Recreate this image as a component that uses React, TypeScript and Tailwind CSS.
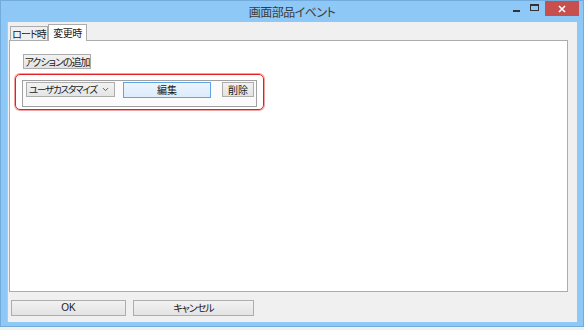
import { ChevronDown } from 'lucide-react';

const jp = "font-['Noto_Sans_CJK_JP','Noto_Sans',sans-serif] [font-feature-settings:'palt']";

function Btn({ label, className }: { label: string; className: string }) {
  return (
    <div
      className={`flex items-center justify-center whitespace-nowrap border border-[#adadad] bg-gradient-to-b from-[#f2f2f2] to-[#e3e3e3] text-[10px] leading-none text-[#1a1a1a] ${className}`}
    >
      {label}
    </div>
  );
}

export default function App() {
  return (
    <div className={`w-[584px] h-[330px] bg-[#f0f0f0] ${jp}`}>
      <div className="h-[327px] bg-[#8dc8f6] border border-[#73acdc] flex flex-col px-[6px] pb-[4px]">
        {/* Title bar */}
        <div className="h-[21px] relative flex items-center justify-center">
          <span className="text-[12px] text-[#3c3c3c] leading-none tracking-[-0.5px]">画面部品イベント</span>
          <div className="absolute right-[-2px] top-0 flex items-start">
            <div className="w-[18px] h-[15px] flex items-center justify-center">
              <div className="w-[7px] h-[2px] bg-[#333] mt-[5px]" />
            </div>
            <div className="w-[18px] h-[15px] flex items-center justify-center">
              <div className="w-[9px] h-[7px] border border-t-2 border-[#333] mt-[-2px]" />
            </div>
            <div className="w-[34px] h-[15px] bg-[#c7504f] flex items-center justify-center ml-[2px]">
              <svg width="8" height="8" viewBox="0 0 8 8">
                <path d="M1 1L7 7M7 1L1 7" stroke="#fff" strokeWidth="1.6" />
              </svg>
            </div>
          </div>
        </div>

        {/* Client area */}
        <div className="flex-1 bg-[#f0f0f0] border-l border-[#b9c9d6] flex flex-col">
          {/* Tabs */}
          <div className="h-[18px] flex items-end pl-[2px]">
            <div className="w-[38px] h-[14px] flex items-center justify-center whitespace-nowrap border border-b-0 border-[#acacac] bg-[#f0f0f0] text-[10px] text-[#1a1a1a] leading-none tracking-[-1px]">
              ロード時
            </div>
            <div className="w-[39px] h-[17px] -mb-px relative z-10 flex items-center justify-center whitespace-nowrap border border-b-0 border-[#acacac] bg-white text-[10px] text-[#1a1a1a] leading-none tracking-[-0.5px]">
              変更時
            </div>
          </div>

          {/* Tab panel */}
          <div className="ml-[1px] w-[559px] h-[252px] bg-white border border-[#acacac] pt-[13px] pl-[5px]">
            <Btn label="アクションの追加" className="ml-[8px] w-[68px] h-[15px] tracking-[-1px]" />

            <div className="mt-[5px] w-[249px] h-[36px] rounded-[5px] border border-[#e41e1e] shadow-[0_0_0_1px_#f7a0a0] p-[5px] pl-[6px]">
              <div className="w-[235px] h-[27px] border border-[#a0a0a0] bg-[#fbfbfb] flex items-start pt-[1px] pl-[3px]">
                <div className="w-[89px] h-[15px] border border-[#acacac] bg-gradient-to-b from-[#f2f2f2] to-[#e5e5e5] flex items-center pl-[2px] pr-[4px] leading-none text-[#1a1a1a]">
                  <span className="flex-1 whitespace-nowrap text-[9.5px] tracking-[-1.2px]">ユーザカスタマイズ</span>
                  <ChevronDown className="w-[9px] h-[9px] text-[#555]" strokeWidth={2.5} />
                </div>
                <div className="ml-[8px] w-[88px] h-[16px] border border-[#5fa4e6] bg-gradient-to-b from-[#ecf4fc] to-[#dcecfc] flex items-center justify-center text-[10px] leading-none text-[#1a1a1a]">
                  編集
                </div>
                <Btn label="削除" className="ml-[11px] w-[32px] h-[15px]" />
              </div>
            </div>
          </div>

          {/* Bottom buttons */}
          <div className="flex mt-[8px] pl-[3px] gap-[7px]">
            <Btn label="OK" className="w-[115px] h-[16px] font-['Liberation_Sans',sans-serif]" />
            <Btn label="キャンセル" className="w-[121px] h-[16px] tracking-[-1px]" />
          </div>
        </div>
      </div>
    </div>
  );
}
